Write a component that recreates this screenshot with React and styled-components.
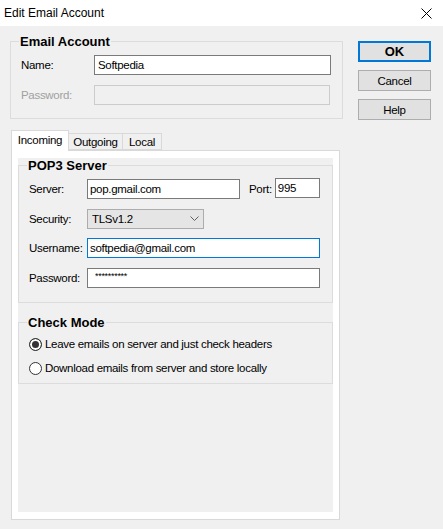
import React from "react";
import styled, { createGlobalStyle } from "styled-components";

const GlobalStyle = createGlobalStyle`
  html, body {
    margin: 0;
    padding: 0;
    background: #f0f0f0;
  }
  * {
    box-sizing: border-box;
  }
`

const Window = styled.div`
  width: 443px;
  height: 529px;
  background: #f0f0f0;
  font-family: "Liberation Sans", Arial, sans-serif;
  font-size: 11.5px;
  letter-spacing: -0.3px;
  color: #000;
  overflow: hidden;
`
const TitleBar = styled.div`
  height: 26px;
  background: #fff;
  display: flex;
  align-items: center;
  justify-content: space-between;
  padding: 0 11px 0 4px;
`
const Title = styled.span`
  font-size: 12px;
  letter-spacing: 0;
`
const Body = styled.div`
  padding: 8px 0 0 10px;
`
const TopRow = styled.div`
  display: flex;
  align-items: flex-start;
`
const Group = styled.fieldset`
  margin: ${p => p.$mt || 0}px 0 0;
  width: ${p => p.$w}px;
  border: 1px solid #dcdcdc;
  padding: 0 10px ${p => p.$pb}px 10px;
  min-inline-size: 0;
`
const Legend = styled.legend`
  font-size: 13px;
  line-height: 15px;
  font-weight: bold;
  letter-spacing: 0;
  padding: 0 1px;
  margin-left: -2px;
`
const Row = styled.div`
  display: flex;
  align-items: center;
  height: ${p => p.$h || 20}px;
  margin-top: ${p => p.$mt}px;
`
const Label = styled.label`
  width: ${p => p.$w}px;
  flex: none;
  color: ${p => (p.$disabled ? "#a0a0a0" : "#000")};
`
const SideLabel = styled.label`
  margin: 0 3px 0 9px;
`
const Field = styled.input`
  width: ${p => p.$w}px;
  height: 20px;
  margin: ${p => (p.$up ? "-1px 0 1px" : "0")};
  padding: 0 0 ${p => (p.$fs ? 3 : 0)}px ${p => p.$pl || 2}px;
  border: 1px solid ${p => (p.$focus ? "#0078d7" : p.disabled ? "#cccccc" : "#7a7a7a")};
  background: ${p => (p.disabled ? "#f0f0f0" : "#fff")};
  font-family: inherit;
  font-size: ${p => p.$fs || 11.5}px;
  letter-spacing: inherit;
  color: #000;
  outline: none;
`
const Combo = styled.div`
  width: 117px;
  height: 20px;
  display: flex;
  align-items: center;
  justify-content: space-between;
  padding: 0 4px 0 4px;
  border: 1px solid #acacac;
  background: #e5e5e5;
`
const ButtonColumn = styled.div`
  display: flex;
  flex-direction: column;
  gap: 8px;
  margin: 7px 0 0 15px;
`
const Button = styled.button`
  width: 73px;
  height: 21px;
  padding: 0;
  border: 1px solid ${p => (p.$primary ? "#0078d7" : "#adadad")};
  box-shadow: ${p => (p.$primary ? "inset 0 0 0 1px #0078d7" : "none")};
  background: #e1e1e1;
  font-family: inherit;
  font-size: ${p => (p.$primary ? 13 : 11.5)}px;
  font-weight: ${p => (p.$primary ? "bold" : "normal")};
  letter-spacing: ${p => (p.$primary ? "0" : "inherit")};
  color: #000;
`
const TabStrip = styled.div`
  display: flex;
  align-items: flex-end;
  height: 21px;
  margin: 10px 0 -1px 1px;
  position: relative;
  z-index: 1;
`
const Tab = styled.div`
  width: ${p => p.$w}px;
  height: ${p => (p.$active ? 21 : 17)}px;
  margin: 0 0 ${p => (p.$active ? 0 : 1)}px ${p => (p.$first ? 0 : -1)}px;
  display: flex;
  align-items: center;
  justify-content: center;
  padding-bottom: ${p => (p.$active ? 2 : 0)}px;
  border: 1px solid #d9d9d9;
  border-bottom: ${p => (p.$active ? "none" : "1px solid #d9d9d9")};
  background: ${p => (p.$active ? "#fff" : "#f0f0f0")};
  position: relative;
  z-index: ${p => (p.$active ? 2 : 1)};
`
const Panel = styled.div`
  width: 329px;
  height: 370px;
  margin-left: 1px;
  padding: 7px 6px;
  border: 1px solid #d9d9d9;
  background: #fff;
`
const PanelInner = styled.div`
  height: 100%;
  background: #f0f0f0;
`
const RadioRow = styled.label`
  display: flex;
  align-items: center;
  height: 16px;
  margin-top: ${p => p.$mt}px;
  gap: 3px;
`
const Radio = styled.input`
  appearance: none;
  margin: 0;
  width: 13px;
  height: 13px;
  border-radius: 50%;
  border: 1px solid #333;
  background: #fff;

  &:checked {
    background: #333;
    box-shadow: inset 0 0 0 2px #fff;
  }
`

const CloseIcon = () => (
  <svg width="11" height="11" viewBox="0 0 11 11">
    <path d="M0.5 0.5 L10.5 10.5 M10.5 0.5 L0.5 10.5" stroke="#000" strokeWidth="1" fill="none" />
  </svg>
)

const Chevron = () => (
  <svg width="9" height="5" viewBox="0 0 9 5">
    <polyline points="0.5,0.5 4.5,4.5 8.5,0.5" stroke="#606060" strokeWidth="1" fill="none" />
  </svg>
)

const App = () => {
  return (
    <Window>
      <GlobalStyle />
      <TitleBar>
        <Title>Edit Email Account</Title>
        <CloseIcon />
      </TitleBar>
      <Body>
        <TopRow>
          <Group $w={333} $pb={13}>
            <Legend>Email Account</Legend>
            <Row $mt={6}>
              <Label $w={73}>Name:</Label>
              <Field $w={237} $pl={3} defaultValue="Softpedia" readOnly />
            </Row>
            <Row $mt={10}>
              <Label $w={73} $disabled>Password:</Label>
              <Field $w={236} disabled />
            </Row>
          </Group>
          <ButtonColumn>
            <Button $primary>OK</Button>
            <Button>Cancel</Button>
            <Button>Help</Button>
          </ButtonColumn>
        </TopRow>

        <TabStrip>
          <Tab $w={58} $first $active>Incoming</Tab>
          <Tab $w={55}>Outgoing</Tab>
          <Tab $w={40}>Local</Tab>
        </TabStrip>
        <Panel>
          <PanelInner>
            <Group $w={315} $pb={14}>
              <Legend>POP3 Server</Legend>
              <Row $mt={6}>
                <Label $w={58}>Server:</Label>
                <Field $w={153} defaultValue="pop.gmail.com" readOnly />
                <SideLabel>Port:</SideLabel>
                <Field $w={45} $up defaultValue="995" readOnly />
              </Row>
              <Row $mt={9.5}>
                <Label $w={58}>Security:</Label>
                <Combo>
                  <span>TLSv1.2</span>
                  <Chevron />
                </Combo>
              </Row>
              <Row $mt={9.5}>
                <Label $w={58}>Username:</Label>
                <Field $w={233} $focus defaultValue="softpedia@gmail.com" readOnly />
              </Row>
              <Row $mt={9.5}>
                <Label $w={58}>Password:</Label>
                <Field $w={233} $pl={7} $fs={9} defaultValue="**********" readOnly />
              </Row>
            </Group>

            <Group $w={315} $mt={12} $pb={7}>
              <Legend>Check Mode</Legend>
              <RadioRow $mt={6.5}>
                <Radio type="radio" name="mode" defaultChecked />
                Leave emails on server and just check headers
              </RadioRow>
              <RadioRow $mt={8}>
                <Radio type="radio" name="mode" />
                Download emails from server and store locally
              </RadioRow>
            </Group>
          </PanelInner>
        </Panel>
      </Body>
    </Window>
  )
}

export default App
